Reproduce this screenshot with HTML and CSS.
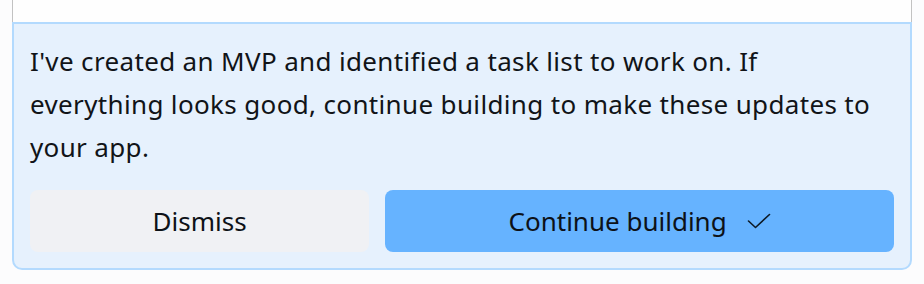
FILE: index.html
```html
<!DOCTYPE html>
<html lang="en">
<head>
<meta charset="utf-8">
<title>Continue building</title>
<link rel="stylesheet" href="styles.css">
</head>
<body>
<div class="page">
  <div class="editor"></div>
  <div class="notice">
    <p class="message">I've created an MVP and identified a task list to work on. If everything looks good, continue building to make these updates to your app.</p>
    <div class="actions">
      <button class="btn btn-dismiss" type="button">Dismiss</button>
      <button class="btn btn-continue" type="button">
        <span>Continue building</span>
        <svg class="check" width="24" height="16" viewBox="0 0 24 16" aria-hidden="true"><path d="M1.5 8 L8.5 14.5 L22.5 1.5" fill="none" stroke="#0d1a26" stroke-width="1.6" stroke-linecap="round" stroke-linejoin="round"/></svg>
      </button>
    </div>
  </div>
</div>
</body>
</html>
```

FILE: styles.css
```css
html, body {
  margin: 0;
  padding: 0;
  background: #fcfcfd;
}
body {
  font-family: "Noto Sans", "Liberation Sans", sans-serif;
  color: #111418;
}
.page {
  width: 900px;
  margin-left: 12px;
}
.editor {
  height: 22px;
  background: #fefefe;
  border-left: 1px solid #c2c2c2;
  border-right: 1px solid #c2c2c2;
}
.notice {
  background: #e6f1fd;
  border: 2px solid #b3dafe;
  border-radius: 0 0 10px 10px;
  padding: 16px;
}
.message {
  margin: 0 0 21px 0;
  font-size: 26px;
  line-height: 43px;
  letter-spacing: 0.35px;
}
.actions {
  display: flex;
  gap: 16px;
}
.btn {
  height: 62px;
  border: none;
  border-radius: 8px;
  font-family: inherit;
  font-size: 26px;
  color: #0d1117;
  display: flex;
  align-items: center;
  justify-content: center;
  gap: 20px;
  padding: 0;
}
.btn-dismiss {
  flex: 2;
  background: #f0f1f4;
}
.btn-continue {
  flex: 3;
  background: #66b3ff;
}
.check {
  display: block;
}
```
